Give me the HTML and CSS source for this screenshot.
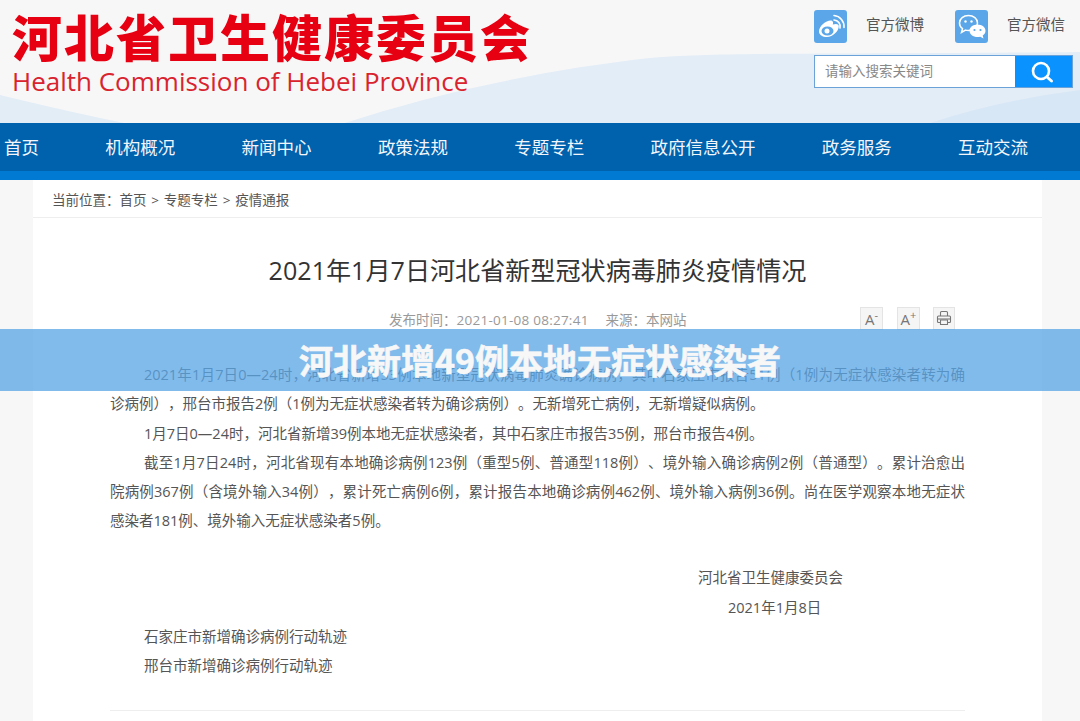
FILE: index.html
```html
<!DOCTYPE html>
<html lang="zh-CN">
<head>
<meta charset="utf-8">
<title>河北新增49例本地无症状感染者</title>
<link rel="stylesheet" href="styles.css">
</head>
<body>
<header class="header">
  <svg class="header-bg" viewBox="0 0 1080 123" preserveAspectRatio="none" aria-hidden="true">
    <path d="M0 95 Q70 112 124 123 L0 123Z" fill="#e3edf6"/>
    <path d="M345 123 C430 95 540 70 650 58 C720 52 800 55 1080 52 L1080 123Z" fill="#e3edf7"/>
    <path d="M930 123 Q1000 100 1080 90 L1080 123Z" fill="#d8e7f6"/>
  </svg>
  <div class="brand">
    <div class="brand-cn">河北省卫生健康委员会</div>
    <div class="brand-en">Health Commission of Hebei Province</div>
  </div>
  <div class="tools">
    <div class="social">
      <div class="social-item">
        <span class="social-icon">
          <svg width="33" height="33" viewBox="0 0 33 33"><path d="M5 21.500C5 16 12 10.500 16.500 10.500c2.500 0 3 2 2.300 4 3-1 6-.8 6 1.800C24.800 21 19 27 13 27 8.500 27 5 25 5 21.500Z" fill="#fff"/><ellipse cx="13.500" cy="21" rx="6" ry="4.500" fill="#5aa6e8"/><circle cx="13" cy="21" r="2.500" fill="#fff"/><path d="M20 10a6.500 6.500 0 0 1 6 8" fill="none" stroke="#fff" stroke-width="1.600" stroke-linecap="round"/><path d="M20 5.500a11 11 0 0 1 10 12" fill="none" stroke="#fff" stroke-width="1.600" stroke-linecap="round"/></svg>
        </span>
        <span class="social-label">官方微博</span>
      </div>
      <div class="social-item">
        <span class="social-icon">
          <svg width="33" height="33" viewBox="0 0 33 33"><path d="M13.500 5.500c5 0 9 3.200 9 7.500s-4 7.500-9 7.500c-1 0-2-.1-3-.4L6.500 22.500l1-3.800C5.500 17.300 4.500 15.300 4.500 13c0-4.300 4-7.500 9-7.500Z" fill="none" stroke="#fff" stroke-width="1.500"/><circle cx="10.500" cy="11.500" r="1.200" fill="#fff"/><circle cx="16.500" cy="11.500" r="1.200" fill="#fff"/><path d="M22.500 14.500c4.500 0 8 2.800 8 6.300 0 2-1 3.600-2.800 4.800l.8 3-3.200-1.800c-.9.200-1.800.3-2.800.3-4.500 0-8-2.800-8-6.300s3.500-6.300 8-6.300Z" fill="#fff"/><circle cx="19.500" cy="20" r="1.100" fill="#5aa6e8"/><circle cx="25.500" cy="20" r="1.100" fill="#5aa6e8"/></svg>
        </span>
        <span class="social-label">官方微信</span>
      </div>
    </div>
    <form class="search">
      <span class="search-input">请输入搜索关键词</span>
      <span class="search-btn">
        <svg width="24" height="24" viewBox="0 0 24 24"><circle cx="11" cy="11" r="8" fill="none" stroke="#fff" stroke-width="2.600"/><path d="M17 17l4.500 4" stroke="#fff" stroke-width="3" stroke-linecap="round"/></svg>
      </span>
    </form>
  </div>
</header>
<nav class="nav">
  <a>首页</a><a>机构概况</a><a>新闻中心</a><a>政策法规</a><a>专题专栏</a><a>政府信息公开</a><a>政务服务</a><a>互动交流</a>
</nav>
<div class="nav-strip"></div>
<main class="page">
  <div class="crumbs">当前位置：首页 &gt; 专题专栏 &gt; 疫情通报</div>
  <article class="article">
    <h1 class="title">2021年1月7日河北省新型冠状病毒肺炎疫情情况</h1>
    <div class="meta">
      <div class="meta-text">发布时间：<span class="meta-date">2021-01-08 08:27:41</span><span class="meta-gap">来源：本网站</span></div>
      <div class="meta-tools">
        <span class="tool">A<sup>-</sup></span>
        <span class="tool">A<sup>+</sup></span>
        <span class="tool tool-print"><svg width="16" height="16" viewBox="0 0 16 16" fill="none" stroke="#777" stroke-width="1.100"><path d="M4.500 6V2.500q0-1 1-1h5q1 0 1 1V6M4.500 12.500H2.500q-1 0-1-1V7q0-1 1-1h11q1 0 1 1v4.500q0 1-1 1h-2M4.500 10h7v4.500h-7z"/><path d="M1.500 9h13"/></svg></span>
      </div>
    </div>
    <div class="body-text">
      <p class="indent">2021年1月7日0—24时，河北省新增53例本地新型冠状病毒肺炎确诊病例，其中石家庄市报告51例（1例为无症状感染者转为确诊病例），邢台市报告2例（1例为无症状感染者转为确诊病例）。无新增死亡病例，无新增疑似病例。</p>
      <p class="indent">1月7日0—24时，河北省新增39例本地无症状感染者，其中石家庄市报告35例，邢台市报告4例。</p>
      <p class="indent">截至1月7日24时，河北省现有本地确诊病例123例（重型5例、普通型118例）、境外输入确诊病例2例（普通型）。累计治愈出院病例367例（含境外输入34例），累计死亡病例6例，累计报告本地确诊病例462例、境外输入病例36例。尚在医学观察本地无症状感染者181例、境外输入无症状感染者5例。</p>
      <div class="sign">
        <p>河北省卫生健康委员会</p>
        <p class="sign-date">2021年1月8日</p>
      </div>
      <p class="indent">石家庄市新增确诊病例行动轨迹</p>
      <p class="indent">邢台市新增确诊病例行动轨迹</p>
    </div>
    <div class="rule"></div>
  </article>
</main>
<div class="banner">河北新增49例本地无症状感染者</div>
</body>
</html>
```
FILE: styles.css
```css
* { box-sizing: border-box; }
html, body { margin: 0; height: 721px; overflow: hidden; }
body {
  background: #f7f7f7;
  font-family: "Open Sans", "Noto Sans CJK SC", sans-serif;
  color: #555;
  position: relative;
  text-spacing-trim: space-all;
}
.header {
  height: 123px;
  position: relative;
  display: flex;
  justify-content: space-between;
  padding: 10px 6px 0 12px;
}
.header-bg { position: absolute; left: 0; top: 0; width: 1080px; height: 123px; }
.brand { position: relative; }
.brand-cn {
  font-family: "Noto Sans CJK SC", sans-serif;
  font-weight: 900;
  font-size: 50px;
  line-height: 50px;
  letter-spacing: 2px;
  margin-bottom: 6px;
  color: #e60012;
  white-space: nowrap;
}
.brand-en {
  font-family: "Open Sans", sans-serif;
  font-size: 26px;
  line-height: 30px;
  color: #d9232e;
  white-space: nowrap;
}
.tools { position: relative; width: 260px; }
.social { display: flex; height: 33px; }
.social-item {
  display: flex;
  align-items: center;
  width: 141px;
  font-size: 14.500px;
  color: #555;
  gap: 19px;
}
.social-item:last-child { width: 118px; }
.social-label { margin-bottom: 6px; }
.social-icon {
  width: 33px;
  height: 33px;
  border-radius: 3px;
  background: #5aa6e8;
  display: block;
  flex: none;
}
.search {
  display: flex;
  height: 33px;
  width: 259px;
  margin-top: 12px;
  border: 1px solid #6ba3d8;
  background: #fff;
}
.search-input {
  flex: 1;
  padding-left: 10px;
  font-size: 13.500px;
  line-height: 31px;
  color: #888;
}
.search-btn {
  width: 57px;
  background: #0a93ff;
  display: flex;
  align-items: center;
  justify-content: center;
  padding-right: 3px;
}
.nav {
  height: 48px;
  background: #0061ad;
  display: flex;
  gap: 66.300px;
  padding: 0 0 2px 4px;
  align-items: center;
  font-family: "Noto Sans CJK SC", sans-serif;
  font-size: 17.500px;
  color: #f2f6fb;
  white-space: nowrap;
}
.nav-strip { height: 9px; background: #007ad2; }
.page {
  width: 1009px;
  height: 541px;
  margin-left: 33px;
  background: #fff;
}
.crumbs {
  height: 38px;
  border-bottom: 1px solid #eeeeee;
  padding: 2px 0 0 19px;
  font-size: 13.500px;
  line-height: 36px;
  word-spacing: 1.300px;
  color: #555;
}
.article { padding: 0 77px; }
.title {
  margin: 35px 0 0;
  font-size: 25.100px;
  line-height: 34px;
  font-weight: 400;
  text-align: center;
  color: #333;
}
.meta {
  position: relative;
  margin-top: 17px;
  height: 30px;
  display: flex;
  justify-content: space-between;
  padding-left: 279px;
  align-items: center;
}
.meta-text { font-size: 13.500px; color: #999; white-space: nowrap; }
.meta-date { letter-spacing: .25px; }
.meta-gap { margin-left: 17px; }
.meta-tools { display: flex; gap: 14px; padding-right: 10px; margin-bottom: 2px; }
.tool {
  width: 23px;
  height: 23px;
  background: #f5f5f5;
  border: 1px solid #e4e4e4;
  font-size: 15px;
  line-height: 22px;
  text-align: center;
  color: #777;
}
.tool sup { font-size: 11px; line-height: 0; }
.tool-print { width: 22px; margin-left: -1px; display: flex; align-items: center; justify-content: center; }
.body-text {
  margin-top: 26px;
  font-size: 14.500px;
  line-height: 29.300px;
  color: #555;
  text-align: justify;
}
.body-text p { margin: 0; }
.indent { text-indent: 34px; }
.sign { margin-top: 27.500px; padding-left: 588px; }
.sign-date { padding-left: 30px; }
.rule { margin-top: 30px; height: 1px; background: #eeeeee; }
.banner {
  position: absolute;
  left: 0;
  top: 329px;
  width: 1080px;
  height: 62px;
  background: rgba(90, 165, 230, 0.76);
  text-align: center;
  font-family: "Noto Sans CJK SC", sans-serif;
  font-weight: 700;
  font-size: 34px;
  line-height: 62px;
  color: #f7f7f7;
  -webkit-text-stroke: .6px #f7f7f7;
}
```
